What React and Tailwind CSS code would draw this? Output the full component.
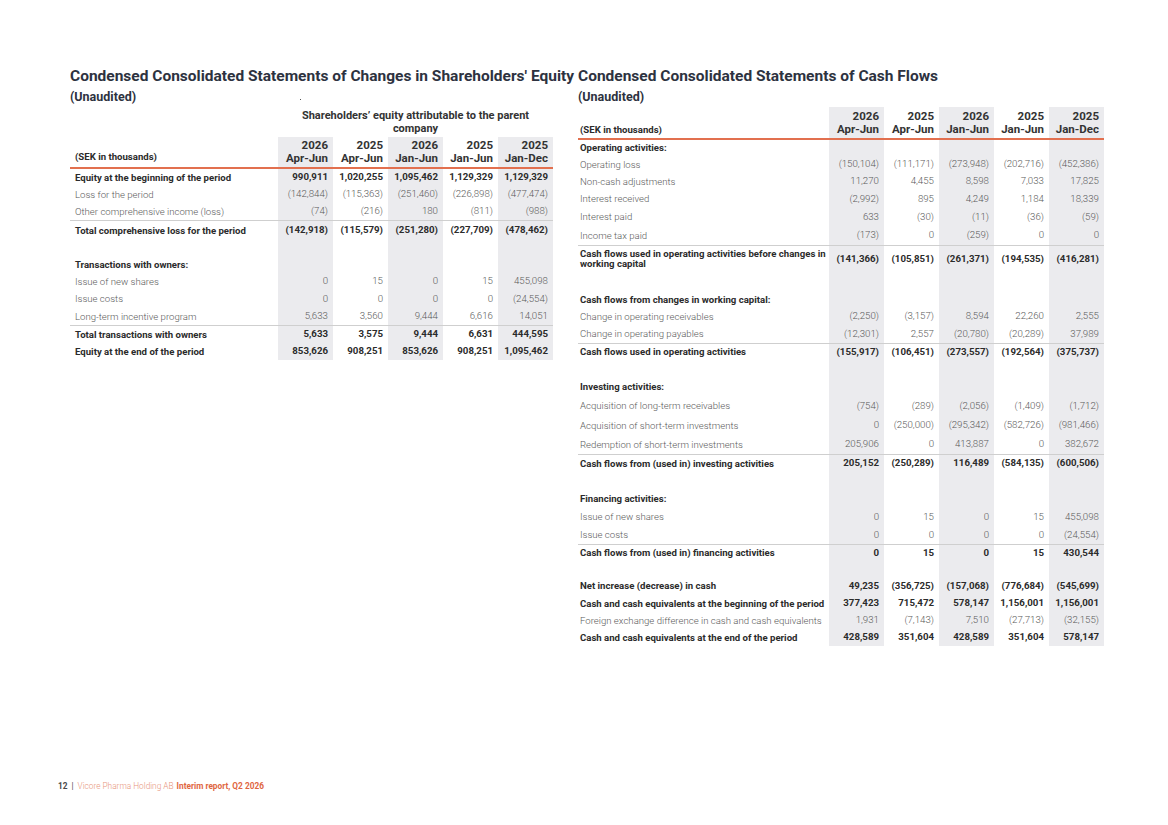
import React from 'react';

const shade = [true, false, true, false, true];

const periods = [
  ['2026', 'Apr-Jun'],
  ['2025', 'Apr-Jun'],
  ['2026', 'Jan-Jun'],
  ['2025', 'Jan-Jun'],
  ['2025', 'Jan-Dec'],
];

const eqRows = [
  { label: 'Equity at the beginning of the period', bold: true, h: 'h-[17px]', v: ['990,911', '1,020,255', '1,095,462', '1,129,329', '1,129,329'] },
  { label: 'Loss for the period', h: 'h-[17px]', v: ['(142,844)', '(115,363)', '(251,460)', '(226,898)', '(477,474)'] },
  { label: 'Other comprehensive income (loss)', h: 'h-[17px]', v: ['(74)', '(216)', '180', '(811)', '(988)'] },
  { label: 'Total comprehensive loss for the period', bold: true, line: true, h: 'h-[20px]', v: ['(142,918)', '(115,579)', '(251,280)', '(227,709)', '(478,462)'] },
  { h: 'h-[16px]' },
  { label: 'Transactions with owners:', bold: true, h: 'h-[17px]' },
  { label: 'Issue of new shares', h: 'h-[17px]', v: ['0', '15', '0', '15', '455,098'] },
  { label: 'Issue costs', h: 'h-[18px]', v: ['0', '0', '0', '0', '(24,554)'] },
  { label: 'Long-term incentive program', h: 'h-[17px]', v: ['5,633', '3,560', '9,444', '6,616', '14,051'] },
  { label: 'Total transactions with owners', bold: true, line: true, h: 'h-[18px]', v: ['5,633', '3,575', '9,444', '6,631', '444,595'] },
  { label: 'Equity at the end of the period', bold: true, h: 'h-[17px]', v: ['853,626', '908,251', '853,626', '908,251', '1,095,462'] },
];

const cfRows = [
  { label: 'Operating activities:', bold: true, h: 'h-[16px]' },
  { label: 'Operating loss', h: 'h-[17px]', v: ['(150,104)', '(111,171)', '(273,948)', '(202,716)', '(452,386)'] },
  { label: 'Non-cash adjustments', h: 'h-[17px]', v: ['11,270', '4,455', '8,598', '7,033', '17,825'] },
  { label: 'Interest received', h: 'h-[18px]', v: ['(2,992)', '895', '4,249', '1,184', '18,339'] },
  { label: 'Interest paid', h: 'h-[18px]', v: ['633', '(30)', '(11)', '(36)', '(59)'] },
  { label: 'Income tax paid', h: 'h-[19px]', v: ['(173)', '0', '(259)', '0', '0'] },
  { label: 'Cash flows used in operating activities before changes in\nworking capital', bold: true, line: true, h: 'h-[27px]', v: ['(141,366)', '(105,851)', '(261,371)', '(194,535)', '(416,281)'] },
  { h: 'h-[19px]' },
  { label: 'Cash flows from changes in working capital:', bold: true, h: 'h-[17px]' },
  { label: 'Change in operating receivables', h: 'h-[17px]', v: ['(2,250)', '(3,157)', '8,594', '22,260', '2,555'] },
  { label: 'Change in operating payables', h: 'h-[18px]', v: ['(12,301)', '2,557', '(20,780)', '(20,289)', '37,989'] },
  { label: 'Cash flows used in operating activities', bold: true, line: true, h: 'h-[17px]', v: ['(155,917)', '(106,451)', '(273,557)', '(192,564)', '(375,737)'] },
  { h: 'h-[17px]' },
  { label: 'Investing activities:', bold: true, h: 'h-[19px]' },
  { label: 'Acquisition of long-term receivables', h: 'h-[20px]', v: ['(754)', '(289)', '(2,056)', '(1,409)', '(1,712)'] },
  { label: 'Acquisition of short-term investments', h: 'h-[19px]', v: ['0', '(250,000)', '(295,342)', '(582,726)', '(981,466)'] },
  { label: 'Redemption of short-term investments', h: 'h-[19px]', v: ['205,906', '0', '413,887', '0', '382,672'] },
  { label: 'Cash flows from (used in) investing activities', bold: true, line: true, h: 'h-[18px]', v: ['205,152', '(250,289)', '116,489', '(584,135)', '(600,506)'] },
  { h: 'h-[17px]' },
  { label: 'Financing activities:', bold: true, h: 'h-[19px]' },
  { label: 'Issue of new shares', h: 'h-[18px]', v: ['0', '15', '0', '15', '455,098'] },
  { label: 'Issue costs', h: 'h-[18px]', v: ['0', '0', '0', '0', '(24,554)'] },
  { label: 'Cash flows from (used in) financing activities', bold: true, line: true, h: 'h-[17px]', v: ['0', '15', '0', '15', '430,544'] },
  { h: 'h-[16px]' },
  { label: 'Net increase (decrease) in cash', bold: true, h: 'h-[18px]', v: ['49,235', '(356,725)', '(157,068)', '(776,684)', '(545,699)'] },
  { label: 'Cash and cash equivalents at the beginning of the period', bold: true, h: 'h-[17px]', v: ['377,423', '715,472', '578,147', '1,156,001', '1,156,001'] },
  { label: 'Foreign exchange difference in cash and cash equivalents', h: 'h-[17px]', v: ['1,931', '(7,143)', '7,510', '(27,713)', '(32,155)'] },
  { label: 'Cash and cash equivalents at the end of the period', bold: true, h: 'h-[17px]', v: ['428,589', '351,604', '428,589', '351,604', '578,147'] },
];

function Row({ row, labelPad }) {
  const text = row.bold ? 'font-bold text-[#2b2b2b]' : 'font-light text-[#5a5a5a]';
  return (
    <div className={`flex ${row.h} ${row.line ? 'border-t border-[#cfcfcf]' : ''}`}>
      <div className={`flex-1 flex items-center ${labelPad} whitespace-pre text-[9.6px] leading-[10px] ${text}`}>
        {row.label}
      </div>
      {shade.map((s, i) => (
        <div
          key={i}
          className={`w-[55px] flex items-center justify-end pr-[5px] text-[9.7px] ${text} ${s ? 'bg-[#ebebee]' : ''}`}
        >
          {row.v ? row.v[i] : ''}
        </div>
      ))}
    </div>
  );
}

function Header({ labelPad, h, sekPad }) {
  return (
    <div className={`flex ${h} border-b-2 border-[#e2704f]`}>
      <div className={`flex-1 flex items-end ${labelPad} ${sekPad} text-[9.6px] font-bold text-[#2b2b2b]`}>
        (SEK in thousands)
      </div>
      {periods.map((c, i) => (
        <div
          key={i}
          className={`w-[55px] flex flex-col items-end justify-end pr-[5px] pb-[2px] text-[11.5px] leading-[13px] font-bold text-[#333] ${shade[i] ? 'bg-[#ebebee]' : ''}`}
        >
          <span>{c[0]}</span>
          <span>{c[1]}</span>
        </div>
      ))}
    </div>
  );
}

function Title({ children }) {
  return (
    <div className="whitespace-nowrap">
      <h2 className="text-[15.5px] leading-[20px] font-bold text-[#2d3240]">{children}</h2>
      <p className="mt-[3px] text-[12.5px] leading-[16px] font-bold text-[#2d3240]">(Unaudited)</p>
    </div>
  );
}

export default function App() {
  return (
    <div className="relative w-[1168px] h-[825px] bg-white flex flex-col font-['Roboto',sans-serif]">
      <div className="flex pt-[66px] pl-[70px]">
        <section className="w-[483px]">
          <Title>Condensed Consolidated Statements of Changes in Shareholders' Equity</Title>
          <div className="flex mt-[4px]">
            <div className="flex-1" />
            <div className="w-[275px] text-center text-[11px] leading-[13px] font-bold text-[#333]">
              Shareholders’ equity attributable to the parent company
            </div>
          </div>
          <div className="mt-[2px]">
            <Header labelPad="pl-[5px]" sekPad="pb-[3px]" h="h-[32px]" />
            {eqRows.map((r, i) => (
              <Row key={i} row={r} labelPad="pl-[5px]" />
            ))}
          </div>
        </section>

        <section className="w-[526px] ml-[25px]">
          <Title>Condensed Consolidated Statements of Cash Flows</Title>
          <div className="mt-[2px]">
            <Header labelPad="pl-[2px]" sekPad="pb-[1px]" h="h-[33px]" />
            {cfRows.map((r, i) => (
              <Row key={i} row={r} labelPad="pl-[2px]" />
            ))}
          </div>
        </section>
      </div>

      <span className="absolute left-[300px] top-[99px] w-px h-px bg-[#555]" />

      <footer className="mt-auto pb-[34px] pl-[58px] text-[8.3px] leading-[10px] whitespace-nowrap">
        <span className="font-bold text-[#4a4a4a]">12</span>
        <span className="text-[#4a4a4a] mx-[4px]">|</span>
        <span className="font-light text-[#e8957c]">Vicore Pharma Holding AB</span>
        <span className="ml-[3px] font-bold text-[#e0663f]">Interim report, Q2 2026</span>
      </footer>
    </div>
  );
}
